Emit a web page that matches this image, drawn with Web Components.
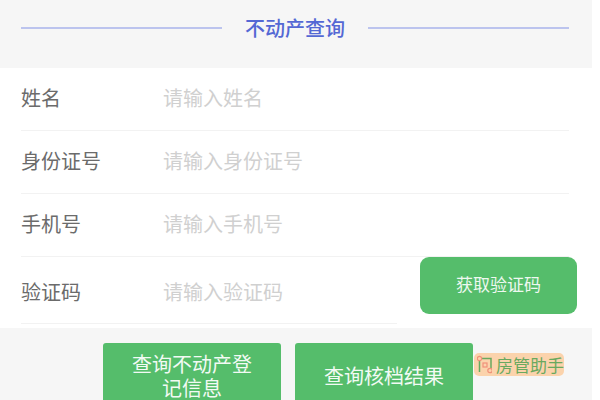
<!DOCTYPE html>
<html lang="zh">
<head>
<meta charset="utf-8">
<style>
html, body { margin: 0; height: 400px; overflow: hidden; background: #fff; }
body { width: 592px; font-family: "Noto Sans CJK SC", "Noto Sans", sans-serif; }
</style>
</head>
<body>
<query-title>不动产查询</query-title>
<query-form>
  <form-row label="姓名" hint="请输入姓名"></form-row>
  <form-row label="身份证号" hint="请输入身份证号"></form-row>
  <form-row label="手机号" hint="请输入手机号"></form-row>
  <code-row label="验证码" hint="请输入验证码" action="获取验证码"></code-row>
</query-form>
<query-actions>
  <green-button style="width:178px">查询不动产登记信息</green-button>
  <green-button style="width:178px">查询核档结果</green-button>
  <helper-badge>房管助手</helper-badge>
</query-actions>
<script>
class QueryTitle extends HTMLElement {
  constructor() {
    super();
    this.attachShadow({mode: 'open'}).innerHTML = `
    <style>
      :host { display: flex; align-items: center; height: 68px; padding: 0 23px 12px 21px; box-sizing: border-box; background: #f6f6f6; }
      i { flex: 1; height: 2px; background: #bcc4ee; }
      span { padding: 0 23px; font-size: 20px; line-height: 28px; font-weight: 500; color: #5468d4; }
    </style>
    <i></i><span><slot></slot></span><i></i>`;
  }
}

class QueryForm extends HTMLElement {
  constructor() {
    super();
    this.attachShadow({mode: 'open'}).innerHTML = `
    <style>
      :host { display: block; height: 260px; background: #fff; }
    </style>
    <slot></slot>`;
  }
}

class FormRow extends HTMLElement {
  constructor() {
    super();
    this.attachShadow({mode: 'open'});
  }
  connectedCallback() {
    this.shadowRoot.innerHTML = `
    <style>
      :host { display: flex; align-items: center; height: 63px; margin: 0 23px 0 21px; padding-bottom: 3px; box-sizing: border-box; border-bottom: 1px solid #f2f2f2; font-size: 20px; }
      b { width: 142px; font-weight: 400; color: #6b6b6b; }
      span { color: #d0d0d0; }
    </style>
    <b>${this.getAttribute('label')}</b><span>${this.getAttribute('hint')}</span>`;
  }
}

class CodeRow extends HTMLElement {
  constructor() {
    super();
    this.attachShadow({mode: 'open'});
  }
  connectedCallback() {
    this.shadowRoot.innerHTML = `
    <style>
      :host { display: flex; height: 71px; margin-left: 21px; font-size: 20px; }
      div { display: flex; align-items: center; width: 376px; height: 67px; box-sizing: border-box; border-bottom: 1px solid #f2f2f2; padding-top: 2px; }
      b { width: 142px; font-weight: 400; color: #6b6b6b; }
      span { color: #d0d0d0; }
      button { width: 157px; height: 57px; margin: 0 0 0 23px; padding: 0 0 5px; border: 0; border-radius: 9px; background: #55bd6b; color: #eef8f0; font: inherit; font-size: 17px; }
    </style>
    <div><b>${this.getAttribute('label')}</b><span>${this.getAttribute('hint')}</span></div>
    <button>${this.getAttribute('action')}</button>`;
  }
}

class QueryActions extends HTMLElement {
  constructor() {
    super();
    this.attachShadow({mode: 'open'}).innerHTML = `
    <style>
      :host { display: flex; align-items: flex-start; gap: 14px; height: 72px; padding: 15px 0 0 103px; box-sizing: border-box; background: #f6f6f6; }
    </style>
    <slot></slot>`;
  }
}

class GreenButton extends HTMLElement {
  constructor() {
    super();
    this.attachShadow({mode: 'open'}).innerHTML = `
    <style>
      :host { display: flex; align-items: center; justify-content: center; flex: none; height: 57px; padding: 9px 24px 0; box-sizing: border-box; border-radius: 3px 3px 0 0; background: #55bd6b; color: #f2faf4; font-size: 20px; line-height: 24px; text-align: center; }
    </style>
    <slot></slot>`;
  }
}

class HelperBadge extends HTMLElement {
  constructor() {
    super();
    this.attachShadow({mode: 'open'}).innerHTML = `
    <style>
      :host { position: absolute; left: 474px; top: 353px; display: flex; align-items: center; gap: 4px; width: 90px; height: 23px; box-sizing: border-box; padding-left: 3px; border-radius: 5px; background: #fbd3ac; color: #69a95f; font-size: 17px; line-height: 23px; white-space: nowrap; }
      svg { flex: none; }
    </style>
    <svg width="15" height="19" viewBox="0 0 15 19" fill="none">
      <path d="M2.5 4v13M5 3.500h9v11" stroke="#69a95f" stroke-width="1.500"/>
      <rect x="6" y="8" width="4" height="4" stroke="#f0917a" stroke-width="1.200"/>
      <circle cx="2.500" cy="3.500" r="2.200" fill="#fbd3ac" stroke="#f0917a" stroke-width="1.200"/>
      <circle cx="13" cy="15.500" r="2.200" fill="#fbd3ac" stroke="#f0917a" stroke-width="1.200"/>
    </svg><slot></slot>`;
  }
}

customElements.define('query-title', QueryTitle);
customElements.define('query-form', QueryForm);
customElements.define('form-row', FormRow);
customElements.define('code-row', CodeRow);
customElements.define('query-actions', QueryActions);
customElements.define('green-button', GreenButton);
customElements.define('helper-badge', HelperBadge);
</script>
</body>
</html>
